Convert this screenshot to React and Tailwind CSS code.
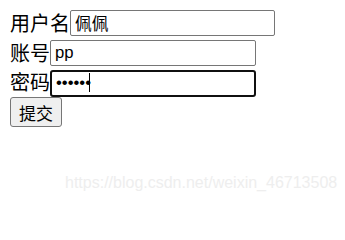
import React from 'react';

const label = 'text-[20px] leading-none text-black';
const inputBase =
  'h-[26px] px-[4px] bg-white text-[16.7px] text-black outline-none font-["Liberation_Sans","Noto_Sans_CJK_SC",sans-serif]';

export default function App() {
  return (
    <div className='relative h-[200px] w-[345px] bg-white pt-[10px] pl-[10px] font-["Noto_Sans_CJK_SC",sans-serif]'>
      <div className="flex flex-col">
        <div className="flex h-[30px] items-start">
          <span className={`${label} mt-[3px]`}>用户名</span>
          <input
            readOnly
            value="佩佩"
            className={`${inputBase} w-[205px] border border-[#767676] rounded-[2px]`}
          />
        </div>
        <div className="flex h-[29px] items-start">
          <span className={`${label} mt-[3px]`}>账号</span>
          <input
            readOnly
            value="pp"
            className={`${inputBase} w-[206px] border border-[#767676] rounded-[2px]`}
          />
        </div>
        <div className="flex h-[28px] items-start">
          <span className={`${label} mt-[3px]`}>密码</span>
          <div className="relative">
            <input
              readOnly
              type="password"
              value="pppppp"
              className={`${inputBase} h-[27px] w-[206px] border-2 border-[#101010] rounded-[3px] tracking-[0px]`}
            />
            <span className="absolute left-[39px] top-[4px] h-[19px] w-px bg-black" />
          </div>
        </div>
        <div>
          <button
            type="button"
            className="h-[30px] w-[52px] border border-[#767676] rounded-[3px] bg-[#efefef] text-[17px] leading-none text-black"
          >
            提交
          </button>
        </div>
      </div>
      <div className='absolute left-[65px] top-[171px] text-[16px] text-[#eeeeee] font-["Liberation_Sans",sans-serif]'>
        https://blog.csdn.net/weixin_46713508
      </div>
    </div>
  );
}
